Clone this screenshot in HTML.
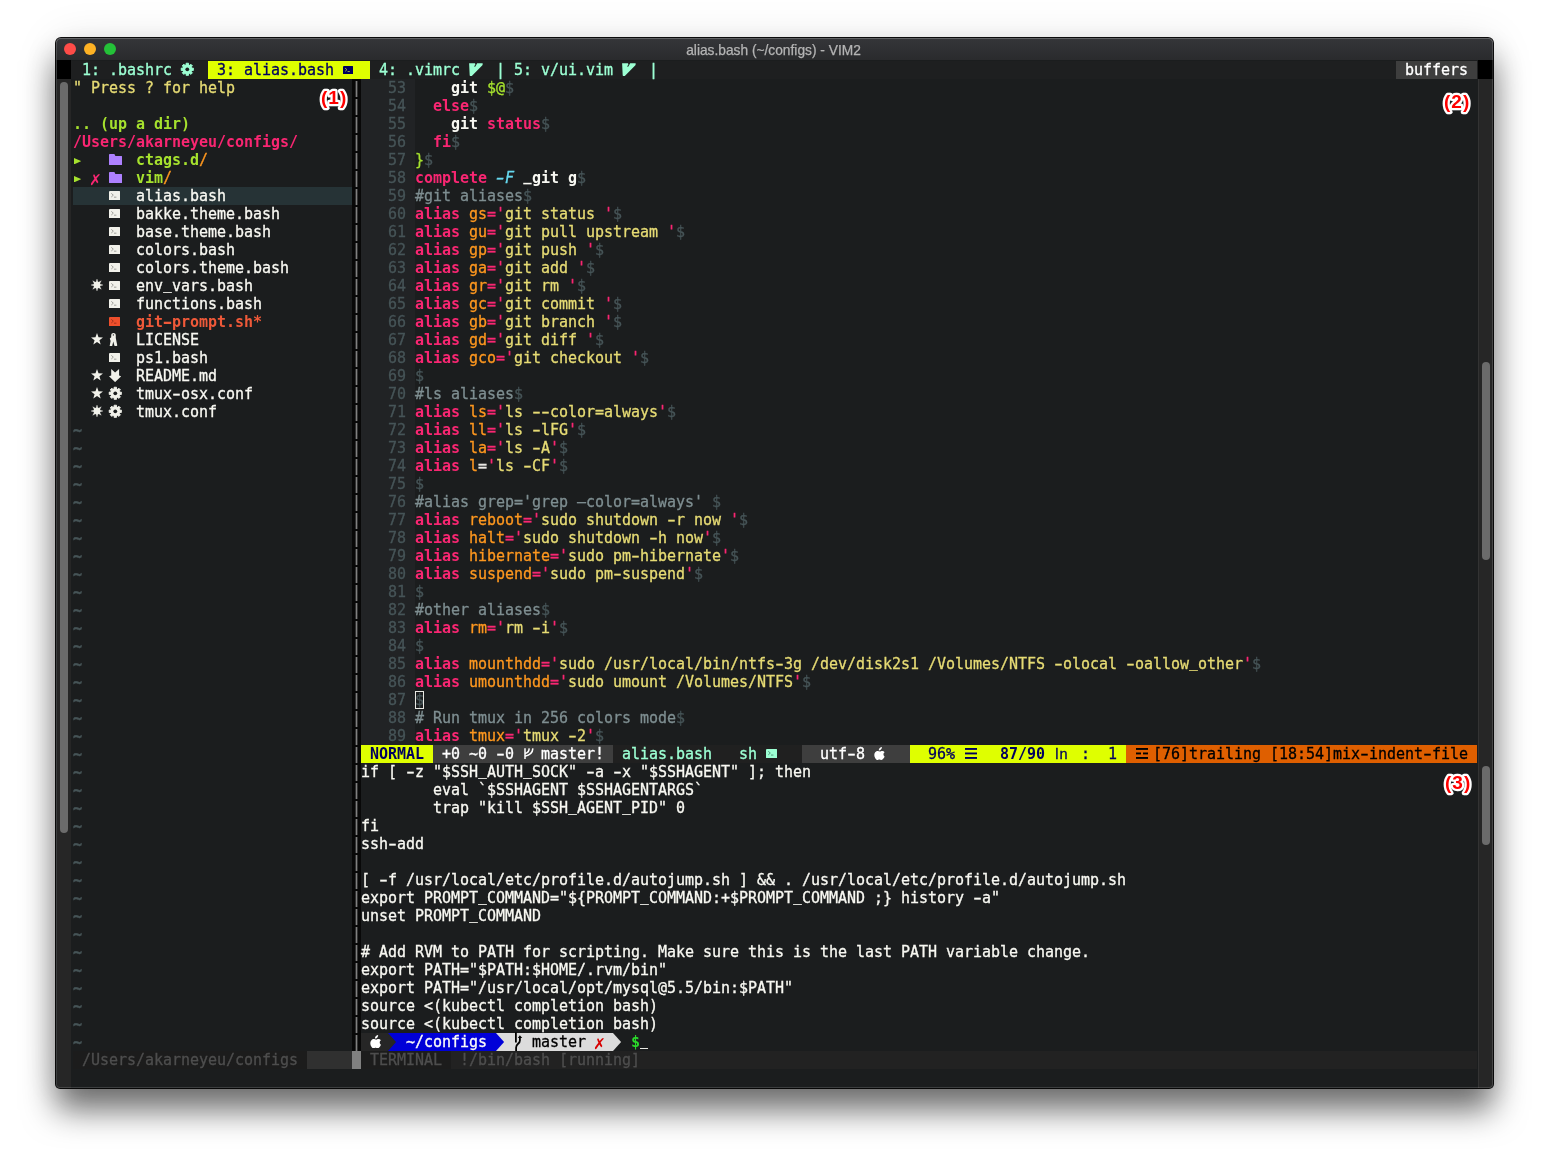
<!DOCTYPE html>
<html lang="en"><head><meta charset="utf-8"><title>alias.bash (~/configs) - VIM2</title>
<style>
html,body{margin:0;padding:0;background:#fff}
body{width:1549px;height:1162px;position:relative;overflow:hidden}
#root{position:absolute;left:0;top:0;width:1549px;height:1162px;will-change:transform}
.b{position:absolute;display:block}
.t{position:absolute;height:18px;line-height:18px;font-family:"DejaVu Sans Mono","Liberation Mono",monospace;font-size:15px;letter-spacing:-0.03125px;white-space:pre}
.t{-webkit-text-stroke:0.3px currentColor}
.B{font-weight:bold;-webkit-text-stroke:0} .I{font-style:italic}
.t i{font-style:inherit;display:inline-block}
.h{transform:scaleX(1.6)}
.u{position:relative;top:-2px;transform:scaleX(0.93)}
.flag{font-size:15px}
.ln{-webkit-text-stroke:0.3px currentColor;position:absolute;height:18px;line-height:18px;font-family:"Liberation Sans","DejaVu Sans",sans-serif;font-size:14.5px;letter-spacing:1px}
#win{position:absolute;left:56px;top:38px;width:1437px;height:1050px;background:#1b1d1e;border-radius:5px 5px 4px 4px;box-shadow:0 0 0 1px rgba(0,0,0,.95),0 22px 33px rgba(0,0,0,.56),0 2px 44px rgba(0,0,0,.10)}
#titlebar{position:absolute;left:56px;top:38px;width:1437px;height:22px;border-radius:5px 5px 0 0;background:linear-gradient(#353639,#2a2b2d);box-shadow:inset 0 1px 0 #58595b}
#rim{position:absolute;left:56px;top:38px;width:1437px;height:1050px;box-sizing:border-box;border:1px solid rgba(255,255,255,.15);border-top-color:rgba(255,255,255,.06);border-radius:5px 5px 4px 4px;pointer-events:none}
.dot{position:absolute;top:5px;width:12px;height:12px;border-radius:50%}
#title{position:absolute;left:-2px;right:0;top:1.5px;-webkit-text-stroke:0.25px #b4b4b4;height:22px;line-height:22px;text-align:center;font-family:"Liberation Sans","DejaVu Sans",sans-serif;font-size:13.75px;color:#b4b4b4}
.lab{position:absolute;font-family:"Liberation Sans","DejaVu Sans",sans-serif;font-weight:bold;font-size:19px;line-height:22px;color:#f00;-webkit-text-stroke:4.4px #fff;paint-order:stroke fill}
</style></head>
<body>
<div id="root">
<div id="win"></div>
<div id="titlebar"><span class="dot" style="left:8px;background:#fe4c48"></span><span class="dot" style="left:28px;background:#feb224"></span><span class="dot" style="left:48px;background:#24c138"></span><span id="title">alias.bash (~/configs) - VIM2</span></div>
<div class="b" style="left:57px;top:61px;width:1436px;height:18px;background:#1e1f20;"></div>
<div class="b" style="left:57px;top:79px;width:14px;height:1009px;background:#262626;border-bottom-left-radius:4px"></div>
<div class="b" style="left:1478px;top:79px;width:15px;height:1009px;background:#262626;border-left:1px solid #333;box-sizing:border-box;border-bottom-right-radius:4px"></div>
<div class="b" style="left:57px;top:60px;width:14px;height:19px;background:#000;"></div>
<div class="b" style="left:1478px;top:60px;width:15px;height:19px;background:#000;"></div>
<div class="b" style="left:60px;top:82px;width:8px;height:751px;background:#6b6b6b;border-radius:4px"></div>
<div class="b" style="left:1482px;top:362px;width:8px;height:198px;background:#6b6b6b;border-radius:4px"></div>
<div class="b" style="left:1482px;top:766px;width:8px;height:79px;background:#6b6b6b;border-radius:4px"></div>
<span class="t" style="left:82px;top:61px;color:#9cffd3;">1: .bashrc</span>
<svg class="b" style="left:180.1px;top:62.2px;" width="14.6" height="14.6" viewBox="-7.3 -7.3 14.6 14.6"><path d="M-1.13 -4.26 L-1.23 -6.08 L1.23 -6.08 L1.13 -4.26 L2.21 -3.82 L3.43 -5.17 L5.17 -3.43 L3.82 -2.21 L4.26 -1.13 L6.08 -1.23 L6.08 1.23 L4.26 1.13 L3.82 2.21 L5.17 3.43 L3.43 5.17 L2.21 3.82 L1.13 4.26 L1.23 6.08 L-1.23 6.08 L-1.13 4.26 L-2.21 3.82 L-3.43 5.17 L-5.17 3.43 L-3.82 2.21 L-4.26 1.13 L-6.08 1.23 L-6.08 -1.23 L-4.26 -1.13 L-3.82 -2.21 L-5.17 -3.43 L-3.43 -5.17 L-2.21 -3.82Z" fill="#9cffd3" stroke="#9cffd3" stroke-width="0.9" stroke-linejoin="round"/><circle r="4.76" fill="#9cffd3"/><circle r="1.89" fill="#1e1f20"/></svg>
<div class="b" style="left:208px;top:61px;width:162px;height:18px;background:#dfff00;"></div>
<span class="t" style="left:217px;top:61px;color:#00005f;">3: alias.bash</span>
<svg class="b" style="left:343px;top:65.5px;" width="10.4" height="8.6" viewBox="0 0 10.4 8.6"><rect x="0" y="0" width="10.4" height="8.6" rx="1" fill="#00005f"/><path d="M2.12 2.13 L3.96 3.70 L2.12 5.36" fill="none" stroke="#b9d34d" stroke-width="0.8"/><path d="M4.60 5.55 H6.81" stroke="#b9d34d" stroke-width="0.8"/></svg>
<span class="t" style="left:379px;top:61px;color:#9cffd3;">4: .vimrc</span>
<svg class="b" style="left:468.6px;top:62.8px;" width="14" height="13.6" viewBox="0 0 14 13.6"><path d="M0.1 0.2 H6 L6.4 1.6 L5.2 3.3 L6 4 L8.2 0.2 H13.6 Q13.9 1.2 13.4 2.2 L2.6 13.2 Q1.4 13.6 0.7 12.4 Z" fill="#9cffd3"/></svg>
<span class="t" style="left:496px;top:61px;color:#9cffd3;">|</span>
<span class="t" style="left:514px;top:61px;color:#9cffd3;">5: v/ui.vim</span>
<svg class="b" style="left:621.6px;top:62.8px;" width="14" height="13.6" viewBox="0 0 14 13.6"><path d="M0.1 0.2 H6 L6.4 1.6 L5.2 3.3 L6 4 L8.2 0.2 H13.6 Q13.9 1.2 13.4 2.2 L2.6 13.2 Q1.4 13.6 0.7 12.4 Z" fill="#9cffd3"/></svg>
<span class="t" style="left:649px;top:61px;color:#9cffd3;">|</span>
<div class="b" style="left:1396px;top:61px;width:81px;height:18px;background:#3e3e3e;"></div>
<span class="t" style="left:1405px;top:61px;color:#ffffff;">buffers</span>
<span class="t" style="left:73px;top:79px;color:#e6db74;">" Press ? for help</span>
<span class="t B" style="left:73px;top:115px;color:#a6e22e;">.. (up a dir)</span>
<span class="t B" style="left:73px;top:133px;color:#f92672;">/Users/akarneyeu/configs/</span>
<svg class="b" style="left:73.6px;top:157.6px;" width="7.4" height="6.4" viewBox="0 0 7.4 6.4"><path d="M0 0 L7.4 3.2 L0 6.4 Z" fill="#a6e22e"/></svg>
<svg class="b" style="left:108.7px;top:153.9px;" width="13.1" height="11.2" viewBox="0 0 13.1 11.2"><path d="M0 0.8 Q0 0 0.8 0 H5.4 L6.4 2 H12.4 Q13.1 2 13.1 2.8 V10.4 Q13.1 11.2 12.3 11.2 H0.8 Q0 11.2 0 10.4 Z" fill="#ae81ff"/></svg>
<span class="t B" style="left:136px;top:151px;color:#a6e22e;">ctags.d</span>
<span class="t" style="left:199px;top:151px;color:#fd971f;">/</span>
<svg class="b" style="left:73.6px;top:175.6px;" width="7.4" height="6.4" viewBox="0 0 7.4 6.4"><path d="M0 0 L7.4 3.2 L0 6.4 Z" fill="#a6e22e"/></svg>
<span class="t B" style="left:91px;top:169px;color:#f92672;font-size:18.5px;margin-left:-1.2px;margin-top:0.5px">✗</span>
<svg class="b" style="left:108.7px;top:171.9px;" width="13.1" height="11.2" viewBox="0 0 13.1 11.2"><path d="M0 0.8 Q0 0 0.8 0 H5.4 L6.4 2 H12.4 Q13.1 2 13.1 2.8 V10.4 Q13.1 11.2 12.3 11.2 H0.8 Q0 11.2 0 10.4 Z" fill="#ae81ff"/></svg>
<span class="t B" style="left:136px;top:169px;color:#a6e22e;">vim</span>
<span class="t" style="left:163px;top:169px;color:#fd971f;">/</span>
<div class="b" style="left:73px;top:187px;width:279px;height:18px;background:#263336;"></div>
<svg class="b" style="left:108.8px;top:190.6px;" width="11.3" height="9.6" viewBox="0 0 11.3 9.6"><rect x="0" y="0" width="11.3" height="9.6" rx="1" fill="#f1f1ea"/><path d="M2.30 2.37 L4.30 4.13 L2.30 5.99" fill="none" stroke="#8a8a86" stroke-width="0.8"/><path d="M5.00 6.19 H7.40" stroke="#8a8a86" stroke-width="0.8"/></svg>
<span class="t" style="left:136px;top:187px;color:#f8f8f2;">alias.bash</span>
<svg class="b" style="left:108.8px;top:208.6px;" width="11.3" height="9.6" viewBox="0 0 11.3 9.6"><rect x="0" y="0" width="11.3" height="9.6" rx="1" fill="#f1f1ea"/><path d="M2.30 2.37 L4.30 4.13 L2.30 5.99" fill="none" stroke="#8a8a86" stroke-width="0.8"/><path d="M5.00 6.19 H7.40" stroke="#8a8a86" stroke-width="0.8"/></svg>
<span class="t" style="left:136px;top:205px;color:#f8f8f2;">bakke.theme.bash</span>
<svg class="b" style="left:108.8px;top:226.6px;" width="11.3" height="9.6" viewBox="0 0 11.3 9.6"><rect x="0" y="0" width="11.3" height="9.6" rx="1" fill="#f1f1ea"/><path d="M2.30 2.37 L4.30 4.13 L2.30 5.99" fill="none" stroke="#8a8a86" stroke-width="0.8"/><path d="M5.00 6.19 H7.40" stroke="#8a8a86" stroke-width="0.8"/></svg>
<span class="t" style="left:136px;top:223px;color:#f8f8f2;">base.theme.bash</span>
<svg class="b" style="left:108.8px;top:244.6px;" width="11.3" height="9.6" viewBox="0 0 11.3 9.6"><rect x="0" y="0" width="11.3" height="9.6" rx="1" fill="#f1f1ea"/><path d="M2.30 2.37 L4.30 4.13 L2.30 5.99" fill="none" stroke="#8a8a86" stroke-width="0.8"/><path d="M5.00 6.19 H7.40" stroke="#8a8a86" stroke-width="0.8"/></svg>
<span class="t" style="left:136px;top:241px;color:#f8f8f2;">colors.bash</span>
<svg class="b" style="left:108.8px;top:262.6px;" width="11.3" height="9.6" viewBox="0 0 11.3 9.6"><rect x="0" y="0" width="11.3" height="9.6" rx="1" fill="#f1f1ea"/><path d="M2.30 2.37 L4.30 4.13 L2.30 5.99" fill="none" stroke="#8a8a86" stroke-width="0.8"/><path d="M5.00 6.19 H7.40" stroke="#8a8a86" stroke-width="0.8"/></svg>
<span class="t" style="left:136px;top:259px;color:#f8f8f2;">colors.theme.bash</span>
<svg class="b" style="left:90px;top:278.3px;" width="14" height="14" viewBox="-7 -7 14 14"><path d="M0.00 -6.00 L1.07 -2.59 L4.24 -4.24 L2.59 -1.07 L6.00 0.00 L2.59 1.07 L4.24 4.24 L1.07 2.59 L0.00 6.00 L-1.07 2.59 L-4.24 4.24 L-2.59 1.07 L-6.00 0.00 L-2.59 -1.07 L-4.24 -4.24 L-1.07 -2.59Z" fill="#f1f1ea" stroke="#f1f1ea" stroke-width="0.3" stroke-linejoin="round"/><circle r="3.2" fill="#f1f1ea"/></svg>
<svg class="b" style="left:108.8px;top:280.6px;" width="11.3" height="9.6" viewBox="0 0 11.3 9.6"><rect x="0" y="0" width="11.3" height="9.6" rx="1" fill="#f1f1ea"/><path d="M2.30 2.37 L4.30 4.13 L2.30 5.99" fill="none" stroke="#8a8a86" stroke-width="0.8"/><path d="M5.00 6.19 H7.40" stroke="#8a8a86" stroke-width="0.8"/></svg>
<span class="t" style="left:136px;top:277px;color:#f8f8f2;">env<i class="u">_</i>vars.bash</span>
<svg class="b" style="left:108.8px;top:298.6px;" width="11.3" height="9.6" viewBox="0 0 11.3 9.6"><rect x="0" y="0" width="11.3" height="9.6" rx="1" fill="#f1f1ea"/><path d="M2.30 2.37 L4.30 4.13 L2.30 5.99" fill="none" stroke="#8a8a86" stroke-width="0.8"/><path d="M5.00 6.19 H7.40" stroke="#8a8a86" stroke-width="0.8"/></svg>
<span class="t" style="left:136px;top:295px;color:#f8f8f2;">functions.bash</span>
<svg class="b" style="left:108.8px;top:316.6px;" width="11.3" height="9.6" viewBox="0 0 11.3 9.6"><rect x="0" y="0" width="11.3" height="9.6" rx="1" fill="#ee4f2c"/><path d="M2.30 2.37 L4.30 4.13 L2.30 5.99" fill="none" stroke="#8a2a18" stroke-width="0.8"/><path d="M5.00 6.19 H7.40" stroke="#8a2a18" stroke-width="0.8"/></svg>
<span class="t B" style="left:136px;top:313px;color:#ef5939;">git<i class="h">-</i>prompt.sh*</span>
<svg class="b" style="left:90.1px;top:332.3px;" width="14" height="14" viewBox="-7 -7 14 14"><path d="M0.00 -5.90 L1.50 -1.66 L5.99 -1.55 L2.43 1.19 L3.70 5.50 L0.00 2.95 L-3.70 5.50 L-2.43 1.19 L-5.99 -1.55 L-1.50 -1.66Z" fill="#f1f1ea"/></svg>
<svg class="b" style="left:109.2px;top:332.9px;" width="8.4" height="13.4" viewBox="0 0 8.4 13.4"><path d="M2.2 2.4 C2.2 0.8 3.2 0 4.5 0 C5.8 0 6.8 0.8 6.8 2.4 L6.8 5 L8.3 12.6 L7 13.4 L5.4 12.8 L4.3 8.6 L3.2 13 L0.6 13.2 L1.6 8 L0.8 5.6 L2.2 4.2 Z" fill="#f1f1ea"/><circle cx="4.4" cy="1.9" r="0.65" fill="#1b1d1e"/></svg>
<span class="t" style="left:136px;top:331px;color:#f8f8f2;">LICENSE</span>
<svg class="b" style="left:108.8px;top:352.6px;" width="11.3" height="9.6" viewBox="0 0 11.3 9.6"><rect x="0" y="0" width="11.3" height="9.6" rx="1" fill="#f1f1ea"/><path d="M2.30 2.37 L4.30 4.13 L2.30 5.99" fill="none" stroke="#8a8a86" stroke-width="0.8"/><path d="M5.00 6.19 H7.40" stroke="#8a8a86" stroke-width="0.8"/></svg>
<span class="t" style="left:136px;top:349px;color:#f8f8f2;">ps1.bash</span>
<svg class="b" style="left:90.1px;top:368.3px;" width="14" height="14" viewBox="-7 -7 14 14"><path d="M0.00 -5.90 L1.50 -1.66 L5.99 -1.55 L2.43 1.19 L3.70 5.50 L0.00 2.95 L-3.70 5.50 L-2.43 1.19 L-5.99 -1.55 L-1.50 -1.66Z" fill="#f1f1ea"/></svg>
<svg class="b" style="left:108.8px;top:369px;" width="12.2" height="13.1" viewBox="0 0 12.2 13.1"><path d="M2.2 0 L6.1 3.4 L10.1 0 V6.4 L12.2 7.3 L6.1 13.1 L0 7.3 L2.2 6.4 Z" fill="#f1f1ea"/></svg>
<span class="t" style="left:136px;top:367px;color:#f8f8f2;">README.md</span>
<svg class="b" style="left:90.1px;top:386.3px;" width="14" height="14" viewBox="-7 -7 14 14"><path d="M0.00 -5.90 L1.50 -1.66 L5.99 -1.55 L2.43 1.19 L3.70 5.50 L0.00 2.95 L-3.70 5.50 L-2.43 1.19 L-5.99 -1.55 L-1.50 -1.66Z" fill="#f1f1ea"/></svg>
<svg class="b" style="left:108.0px;top:386.2px;" width="14.6" height="14.6" viewBox="-7.3 -7.3 14.6 14.6"><path d="M-1.13 -4.26 L-1.23 -6.08 L1.23 -6.08 L1.13 -4.26 L2.21 -3.82 L3.43 -5.17 L5.17 -3.43 L3.82 -2.21 L4.26 -1.13 L6.08 -1.23 L6.08 1.23 L4.26 1.13 L3.82 2.21 L5.17 3.43 L3.43 5.17 L2.21 3.82 L1.13 4.26 L1.23 6.08 L-1.23 6.08 L-1.13 4.26 L-2.21 3.82 L-3.43 5.17 L-5.17 3.43 L-3.82 2.21 L-4.26 1.13 L-6.08 1.23 L-6.08 -1.23 L-4.26 -1.13 L-3.82 -2.21 L-5.17 -3.43 L-3.43 -5.17 L-2.21 -3.82Z" fill="#f1f1ea" stroke="#f1f1ea" stroke-width="0.9" stroke-linejoin="round"/><circle r="4.76" fill="#f1f1ea"/><circle r="1.89" fill="#1b1d1e"/></svg>
<span class="t" style="left:136px;top:385px;color:#f8f8f2;">tmux<i class="h">-</i>osx.conf</span>
<svg class="b" style="left:90px;top:404.3px;" width="14" height="14" viewBox="-7 -7 14 14"><path d="M0.00 -6.00 L1.07 -2.59 L4.24 -4.24 L2.59 -1.07 L6.00 0.00 L2.59 1.07 L4.24 4.24 L1.07 2.59 L0.00 6.00 L-1.07 2.59 L-4.24 4.24 L-2.59 1.07 L-6.00 0.00 L-2.59 -1.07 L-4.24 -4.24 L-1.07 -2.59Z" fill="#f1f1ea" stroke="#f1f1ea" stroke-width="0.3" stroke-linejoin="round"/><circle r="3.2" fill="#f1f1ea"/></svg>
<svg class="b" style="left:108.0px;top:404.2px;" width="14.6" height="14.6" viewBox="-7.3 -7.3 14.6 14.6"><path d="M-1.13 -4.26 L-1.23 -6.08 L1.23 -6.08 L1.13 -4.26 L2.21 -3.82 L3.43 -5.17 L5.17 -3.43 L3.82 -2.21 L4.26 -1.13 L6.08 -1.23 L6.08 1.23 L4.26 1.13 L3.82 2.21 L5.17 3.43 L3.43 5.17 L2.21 3.82 L1.13 4.26 L1.23 6.08 L-1.23 6.08 L-1.13 4.26 L-2.21 3.82 L-3.43 5.17 L-5.17 3.43 L-3.82 2.21 L-4.26 1.13 L-6.08 1.23 L-6.08 -1.23 L-4.26 -1.13 L-3.82 -2.21 L-5.17 -3.43 L-3.43 -5.17 L-2.21 -3.82Z" fill="#f1f1ea" stroke="#f1f1ea" stroke-width="0.9" stroke-linejoin="round"/><circle r="4.76" fill="#f1f1ea"/><circle r="1.89" fill="#1b1d1e"/></svg>
<span class="t" style="left:136px;top:403px;color:#f8f8f2;">tmux.conf</span>
<span class="t B" style="left:73px;top:421px;color:#465457;margin-top:1px;-webkit-text-stroke:0.45px #465457">~</span>
<span class="t B" style="left:73px;top:439px;color:#465457;margin-top:1px;-webkit-text-stroke:0.45px #465457">~</span>
<span class="t B" style="left:73px;top:457px;color:#465457;margin-top:1px;-webkit-text-stroke:0.45px #465457">~</span>
<span class="t B" style="left:73px;top:475px;color:#465457;margin-top:1px;-webkit-text-stroke:0.45px #465457">~</span>
<span class="t B" style="left:73px;top:493px;color:#465457;margin-top:1px;-webkit-text-stroke:0.45px #465457">~</span>
<span class="t B" style="left:73px;top:511px;color:#465457;margin-top:1px;-webkit-text-stroke:0.45px #465457">~</span>
<span class="t B" style="left:73px;top:529px;color:#465457;margin-top:1px;-webkit-text-stroke:0.45px #465457">~</span>
<span class="t B" style="left:73px;top:547px;color:#465457;margin-top:1px;-webkit-text-stroke:0.45px #465457">~</span>
<span class="t B" style="left:73px;top:565px;color:#465457;margin-top:1px;-webkit-text-stroke:0.45px #465457">~</span>
<span class="t B" style="left:73px;top:583px;color:#465457;margin-top:1px;-webkit-text-stroke:0.45px #465457">~</span>
<span class="t B" style="left:73px;top:601px;color:#465457;margin-top:1px;-webkit-text-stroke:0.45px #465457">~</span>
<span class="t B" style="left:73px;top:619px;color:#465457;margin-top:1px;-webkit-text-stroke:0.45px #465457">~</span>
<span class="t B" style="left:73px;top:637px;color:#465457;margin-top:1px;-webkit-text-stroke:0.45px #465457">~</span>
<span class="t B" style="left:73px;top:655px;color:#465457;margin-top:1px;-webkit-text-stroke:0.45px #465457">~</span>
<span class="t B" style="left:73px;top:673px;color:#465457;margin-top:1px;-webkit-text-stroke:0.45px #465457">~</span>
<span class="t B" style="left:73px;top:691px;color:#465457;margin-top:1px;-webkit-text-stroke:0.45px #465457">~</span>
<span class="t B" style="left:73px;top:709px;color:#465457;margin-top:1px;-webkit-text-stroke:0.45px #465457">~</span>
<span class="t B" style="left:73px;top:727px;color:#465457;margin-top:1px;-webkit-text-stroke:0.45px #465457">~</span>
<span class="t B" style="left:73px;top:745px;color:#465457;margin-top:1px;-webkit-text-stroke:0.45px #465457">~</span>
<span class="t B" style="left:73px;top:763px;color:#465457;margin-top:1px;-webkit-text-stroke:0.45px #465457">~</span>
<span class="t B" style="left:73px;top:781px;color:#465457;margin-top:1px;-webkit-text-stroke:0.45px #465457">~</span>
<span class="t B" style="left:73px;top:799px;color:#465457;margin-top:1px;-webkit-text-stroke:0.45px #465457">~</span>
<span class="t B" style="left:73px;top:817px;color:#465457;margin-top:1px;-webkit-text-stroke:0.45px #465457">~</span>
<span class="t B" style="left:73px;top:835px;color:#465457;margin-top:1px;-webkit-text-stroke:0.45px #465457">~</span>
<span class="t B" style="left:73px;top:853px;color:#465457;margin-top:1px;-webkit-text-stroke:0.45px #465457">~</span>
<span class="t B" style="left:73px;top:871px;color:#465457;margin-top:1px;-webkit-text-stroke:0.45px #465457">~</span>
<span class="t B" style="left:73px;top:889px;color:#465457;margin-top:1px;-webkit-text-stroke:0.45px #465457">~</span>
<span class="t B" style="left:73px;top:907px;color:#465457;margin-top:1px;-webkit-text-stroke:0.45px #465457">~</span>
<span class="t B" style="left:73px;top:925px;color:#465457;margin-top:1px;-webkit-text-stroke:0.45px #465457">~</span>
<span class="t B" style="left:73px;top:943px;color:#465457;margin-top:1px;-webkit-text-stroke:0.45px #465457">~</span>
<span class="t B" style="left:73px;top:961px;color:#465457;margin-top:1px;-webkit-text-stroke:0.45px #465457">~</span>
<span class="t B" style="left:73px;top:979px;color:#465457;margin-top:1px;-webkit-text-stroke:0.45px #465457">~</span>
<span class="t B" style="left:73px;top:997px;color:#465457;margin-top:1px;-webkit-text-stroke:0.45px #465457">~</span>
<span class="t B" style="left:73px;top:1015px;color:#465457;margin-top:1px;-webkit-text-stroke:0.45px #465457">~</span>
<span class="t B" style="left:73px;top:1033px;color:#465457;margin-top:1px;-webkit-text-stroke:0.45px #465457">~</span>
<div class="b" style="left:352px;top:79px;width:9px;height:972px;background:#080808;"></div>
<span class="t B" style="left:352px;top:79px;color:#808080;">|</span>
<span class="t B" style="left:352px;top:97px;color:#808080;">|</span>
<span class="t B" style="left:352px;top:115px;color:#808080;">|</span>
<span class="t B" style="left:352px;top:133px;color:#808080;">|</span>
<span class="t B" style="left:352px;top:151px;color:#808080;">|</span>
<span class="t B" style="left:352px;top:169px;color:#808080;">|</span>
<span class="t B" style="left:352px;top:187px;color:#808080;">|</span>
<span class="t B" style="left:352px;top:205px;color:#808080;">|</span>
<span class="t B" style="left:352px;top:223px;color:#808080;">|</span>
<span class="t B" style="left:352px;top:241px;color:#808080;">|</span>
<span class="t B" style="left:352px;top:259px;color:#808080;">|</span>
<span class="t B" style="left:352px;top:277px;color:#808080;">|</span>
<span class="t B" style="left:352px;top:295px;color:#808080;">|</span>
<span class="t B" style="left:352px;top:313px;color:#808080;">|</span>
<span class="t B" style="left:352px;top:331px;color:#808080;">|</span>
<span class="t B" style="left:352px;top:349px;color:#808080;">|</span>
<span class="t B" style="left:352px;top:367px;color:#808080;">|</span>
<span class="t B" style="left:352px;top:385px;color:#808080;">|</span>
<span class="t B" style="left:352px;top:403px;color:#808080;">|</span>
<span class="t B" style="left:352px;top:421px;color:#808080;">|</span>
<span class="t B" style="left:352px;top:439px;color:#808080;">|</span>
<span class="t B" style="left:352px;top:457px;color:#808080;">|</span>
<span class="t B" style="left:352px;top:475px;color:#808080;">|</span>
<span class="t B" style="left:352px;top:493px;color:#808080;">|</span>
<span class="t B" style="left:352px;top:511px;color:#808080;">|</span>
<span class="t B" style="left:352px;top:529px;color:#808080;">|</span>
<span class="t B" style="left:352px;top:547px;color:#808080;">|</span>
<span class="t B" style="left:352px;top:565px;color:#808080;">|</span>
<span class="t B" style="left:352px;top:583px;color:#808080;">|</span>
<span class="t B" style="left:352px;top:601px;color:#808080;">|</span>
<span class="t B" style="left:352px;top:619px;color:#808080;">|</span>
<span class="t B" style="left:352px;top:637px;color:#808080;">|</span>
<span class="t B" style="left:352px;top:655px;color:#808080;">|</span>
<span class="t B" style="left:352px;top:673px;color:#808080;">|</span>
<span class="t B" style="left:352px;top:691px;color:#808080;">|</span>
<span class="t B" style="left:352px;top:709px;color:#808080;">|</span>
<span class="t B" style="left:352px;top:727px;color:#808080;">|</span>
<span class="t B" style="left:352px;top:745px;color:#808080;">|</span>
<span class="t B" style="left:352px;top:763px;color:#808080;">|</span>
<span class="t B" style="left:352px;top:781px;color:#808080;">|</span>
<span class="t B" style="left:352px;top:799px;color:#808080;">|</span>
<span class="t B" style="left:352px;top:817px;color:#808080;">|</span>
<span class="t B" style="left:352px;top:835px;color:#808080;">|</span>
<span class="t B" style="left:352px;top:853px;color:#808080;">|</span>
<span class="t B" style="left:352px;top:871px;color:#808080;">|</span>
<span class="t B" style="left:352px;top:889px;color:#808080;">|</span>
<span class="t B" style="left:352px;top:907px;color:#808080;">|</span>
<span class="t B" style="left:352px;top:925px;color:#808080;">|</span>
<span class="t B" style="left:352px;top:943px;color:#808080;">|</span>
<span class="t B" style="left:352px;top:961px;color:#808080;">|</span>
<span class="t B" style="left:352px;top:979px;color:#808080;">|</span>
<span class="t B" style="left:352px;top:997px;color:#808080;">|</span>
<span class="t B" style="left:352px;top:1015px;color:#808080;">|</span>
<span class="t B" style="left:352px;top:1033px;color:#808080;">|</span>
<div class="b" style="left:361px;top:79px;width:54px;height:666px;background:#212325;"></div>
<span class="t" style="left:388px;top:79px;color:#465457;">53</span>
<span class="t B" style="left:451px;top:79px;color:#f8f8f2;">git</span>
<span class="t" style="left:487px;top:79px;color:#a6e22e;">$@</span>
<span class="t" style="left:505px;top:79px;color:#465457;">$</span>
<span class="t" style="left:388px;top:97px;color:#465457;">54</span>
<span class="t B" style="left:433px;top:97px;color:#f92672;">else</span>
<span class="t" style="left:469px;top:97px;color:#465457;">$</span>
<span class="t" style="left:388px;top:115px;color:#465457;">55</span>
<span class="t B" style="left:451px;top:115px;color:#f8f8f2;">git</span>
<span class="t B" style="left:487px;top:115px;color:#f92672;">status</span>
<span class="t" style="left:541px;top:115px;color:#465457;">$</span>
<span class="t" style="left:388px;top:133px;color:#465457;">56</span>
<span class="t B" style="left:433px;top:133px;color:#f92672;">fi</span>
<span class="t" style="left:451px;top:133px;color:#465457;">$</span>
<span class="t" style="left:388px;top:151px;color:#465457;">57</span>
<span class="t" style="left:415px;top:151px;color:#a6e22e;">}</span>
<span class="t" style="left:424px;top:151px;color:#465457;">$</span>
<span class="t" style="left:388px;top:169px;color:#465457;">58</span>
<span class="t B" style="left:415px;top:169px;color:#f92672;">complete</span>
<span class="t I" style="left:496px;top:169px;color:#66d9ef;"><i class="h">-</i>F</span>
<span class="t B" style="left:523px;top:169px;color:#f8f8f2;"><i class="u">_</i>git g</span>
<span class="t" style="left:577px;top:169px;color:#465457;">$</span>
<span class="t" style="left:388px;top:187px;color:#465457;">59</span>
<span class="t" style="left:415px;top:187px;color:#7e8e91;">#git aliases</span>
<span class="t" style="left:523px;top:187px;color:#465457;">$</span>
<span class="t" style="left:388px;top:205px;color:#465457;">60</span>
<span class="t B" style="left:415px;top:205px;color:#f92672;">alias</span>
<span class="t" style="left:469px;top:205px;color:#fd971f;">gs</span>
<span class="t" style="left:487px;top:205px;color:#f92672;">=</span>
<span class="t" style="left:496px;top:205px;color:#f92672;">'</span>
<span class="t" style="left:505px;top:205px;color:#e6db74;">git status</span>
<span class="t" style="left:604px;top:205px;color:#f92672;">'</span>
<span class="t" style="left:613px;top:205px;color:#465457;">$</span>
<span class="t" style="left:388px;top:223px;color:#465457;">61</span>
<span class="t B" style="left:415px;top:223px;color:#f92672;">alias</span>
<span class="t" style="left:469px;top:223px;color:#fd971f;">gu</span>
<span class="t" style="left:487px;top:223px;color:#f92672;">=</span>
<span class="t" style="left:496px;top:223px;color:#f92672;">'</span>
<span class="t" style="left:505px;top:223px;color:#e6db74;">git pull upstream</span>
<span class="t" style="left:667px;top:223px;color:#f92672;">'</span>
<span class="t" style="left:676px;top:223px;color:#465457;">$</span>
<span class="t" style="left:388px;top:241px;color:#465457;">62</span>
<span class="t B" style="left:415px;top:241px;color:#f92672;">alias</span>
<span class="t" style="left:469px;top:241px;color:#fd971f;">gp</span>
<span class="t" style="left:487px;top:241px;color:#f92672;">=</span>
<span class="t" style="left:496px;top:241px;color:#f92672;">'</span>
<span class="t" style="left:505px;top:241px;color:#e6db74;">git push</span>
<span class="t" style="left:586px;top:241px;color:#f92672;">'</span>
<span class="t" style="left:595px;top:241px;color:#465457;">$</span>
<span class="t" style="left:388px;top:259px;color:#465457;">63</span>
<span class="t B" style="left:415px;top:259px;color:#f92672;">alias</span>
<span class="t" style="left:469px;top:259px;color:#fd971f;">ga</span>
<span class="t" style="left:487px;top:259px;color:#f92672;">=</span>
<span class="t" style="left:496px;top:259px;color:#f92672;">'</span>
<span class="t" style="left:505px;top:259px;color:#e6db74;">git add</span>
<span class="t" style="left:577px;top:259px;color:#f92672;">'</span>
<span class="t" style="left:586px;top:259px;color:#465457;">$</span>
<span class="t" style="left:388px;top:277px;color:#465457;">64</span>
<span class="t B" style="left:415px;top:277px;color:#f92672;">alias</span>
<span class="t" style="left:469px;top:277px;color:#fd971f;">gr</span>
<span class="t" style="left:487px;top:277px;color:#f92672;">=</span>
<span class="t" style="left:496px;top:277px;color:#f92672;">'</span>
<span class="t" style="left:505px;top:277px;color:#e6db74;">git rm</span>
<span class="t" style="left:568px;top:277px;color:#f92672;">'</span>
<span class="t" style="left:577px;top:277px;color:#465457;">$</span>
<span class="t" style="left:388px;top:295px;color:#465457;">65</span>
<span class="t B" style="left:415px;top:295px;color:#f92672;">alias</span>
<span class="t" style="left:469px;top:295px;color:#fd971f;">gc</span>
<span class="t" style="left:487px;top:295px;color:#f92672;">=</span>
<span class="t" style="left:496px;top:295px;color:#f92672;">'</span>
<span class="t" style="left:505px;top:295px;color:#e6db74;">git commit</span>
<span class="t" style="left:604px;top:295px;color:#f92672;">'</span>
<span class="t" style="left:613px;top:295px;color:#465457;">$</span>
<span class="t" style="left:388px;top:313px;color:#465457;">66</span>
<span class="t B" style="left:415px;top:313px;color:#f92672;">alias</span>
<span class="t" style="left:469px;top:313px;color:#fd971f;">gb</span>
<span class="t" style="left:487px;top:313px;color:#f92672;">=</span>
<span class="t" style="left:496px;top:313px;color:#f92672;">'</span>
<span class="t" style="left:505px;top:313px;color:#e6db74;">git branch</span>
<span class="t" style="left:604px;top:313px;color:#f92672;">'</span>
<span class="t" style="left:613px;top:313px;color:#465457;">$</span>
<span class="t" style="left:388px;top:331px;color:#465457;">67</span>
<span class="t B" style="left:415px;top:331px;color:#f92672;">alias</span>
<span class="t" style="left:469px;top:331px;color:#fd971f;">gd</span>
<span class="t" style="left:487px;top:331px;color:#f92672;">=</span>
<span class="t" style="left:496px;top:331px;color:#f92672;">'</span>
<span class="t" style="left:505px;top:331px;color:#e6db74;">git diff</span>
<span class="t" style="left:586px;top:331px;color:#f92672;">'</span>
<span class="t" style="left:595px;top:331px;color:#465457;">$</span>
<span class="t" style="left:388px;top:349px;color:#465457;">68</span>
<span class="t B" style="left:415px;top:349px;color:#f92672;">alias</span>
<span class="t" style="left:469px;top:349px;color:#fd971f;">gco</span>
<span class="t" style="left:496px;top:349px;color:#f92672;">=</span>
<span class="t" style="left:505px;top:349px;color:#f92672;">'</span>
<span class="t" style="left:514px;top:349px;color:#e6db74;">git checkout</span>
<span class="t" style="left:631px;top:349px;color:#f92672;">'</span>
<span class="t" style="left:640px;top:349px;color:#465457;">$</span>
<span class="t" style="left:388px;top:367px;color:#465457;">69</span>
<span class="t" style="left:415px;top:367px;color:#465457;">$</span>
<span class="t" style="left:388px;top:385px;color:#465457;">70</span>
<span class="t" style="left:415px;top:385px;color:#7e8e91;">#ls aliases</span>
<span class="t" style="left:514px;top:385px;color:#465457;">$</span>
<span class="t" style="left:388px;top:403px;color:#465457;">71</span>
<span class="t B" style="left:415px;top:403px;color:#f92672;">alias</span>
<span class="t" style="left:469px;top:403px;color:#fd971f;">ls</span>
<span class="t" style="left:487px;top:403px;color:#f92672;">=</span>
<span class="t" style="left:496px;top:403px;color:#f92672;">'</span>
<span class="t" style="left:505px;top:403px;color:#e6db74;">ls <i class="h">-</i><i class="h">-</i>color=always</span>
<span class="t" style="left:658px;top:403px;color:#f92672;">'</span>
<span class="t" style="left:667px;top:403px;color:#465457;">$</span>
<span class="t" style="left:388px;top:421px;color:#465457;">72</span>
<span class="t B" style="left:415px;top:421px;color:#f92672;">alias</span>
<span class="t" style="left:469px;top:421px;color:#fd971f;">ll</span>
<span class="t" style="left:487px;top:421px;color:#f92672;">=</span>
<span class="t" style="left:496px;top:421px;color:#f92672;">'</span>
<span class="t" style="left:505px;top:421px;color:#e6db74;">ls <i class="h">-</i>lFG</span>
<span class="t" style="left:568px;top:421px;color:#f92672;">'</span>
<span class="t" style="left:577px;top:421px;color:#465457;">$</span>
<span class="t" style="left:388px;top:439px;color:#465457;">73</span>
<span class="t B" style="left:415px;top:439px;color:#f92672;">alias</span>
<span class="t" style="left:469px;top:439px;color:#fd971f;">la</span>
<span class="t" style="left:487px;top:439px;color:#f92672;">=</span>
<span class="t" style="left:496px;top:439px;color:#f92672;">'</span>
<span class="t" style="left:505px;top:439px;color:#e6db74;">ls <i class="h">-</i>A</span>
<span class="t" style="left:550px;top:439px;color:#f92672;">'</span>
<span class="t" style="left:559px;top:439px;color:#465457;">$</span>
<span class="t" style="left:388px;top:457px;color:#465457;">74</span>
<span class="t B" style="left:415px;top:457px;color:#f92672;">alias</span>
<span class="t" style="left:469px;top:457px;color:#fd971f;">l</span>
<span class="t" style="left:478px;top:457px;color:#e8e8e3;">=</span>
<span class="t" style="left:487px;top:457px;color:#f92672;">'</span>
<span class="t" style="left:496px;top:457px;color:#e6db74;">ls <i class="h">-</i>CF</span>
<span class="t" style="left:550px;top:457px;color:#f92672;">'</span>
<span class="t" style="left:559px;top:457px;color:#465457;">$</span>
<span class="t" style="left:388px;top:475px;color:#465457;">75</span>
<span class="t" style="left:415px;top:475px;color:#465457;">$</span>
<span class="t" style="left:388px;top:493px;color:#465457;">76</span>
<span class="t" style="left:415px;top:493px;color:#7e8e91;">#alias grep='grep –color=always'</span>
<span class="t" style="left:712px;top:493px;color:#465457;">$</span>
<span class="t" style="left:388px;top:511px;color:#465457;">77</span>
<span class="t B" style="left:415px;top:511px;color:#f92672;">alias</span>
<span class="t" style="left:469px;top:511px;color:#fd971f;">reboot</span>
<span class="t" style="left:523px;top:511px;color:#f92672;">=</span>
<span class="t" style="left:532px;top:511px;color:#f92672;">'</span>
<span class="t" style="left:541px;top:511px;color:#e6db74;">sudo shutdown <i class="h">-</i>r now</span>
<span class="t" style="left:730px;top:511px;color:#f92672;">'</span>
<span class="t" style="left:739px;top:511px;color:#465457;">$</span>
<span class="t" style="left:388px;top:529px;color:#465457;">78</span>
<span class="t B" style="left:415px;top:529px;color:#f92672;">alias</span>
<span class="t" style="left:469px;top:529px;color:#fd971f;">halt</span>
<span class="t" style="left:505px;top:529px;color:#f92672;">=</span>
<span class="t" style="left:514px;top:529px;color:#f92672;">'</span>
<span class="t" style="left:523px;top:529px;color:#e6db74;">sudo shutdown <i class="h">-</i>h now</span>
<span class="t" style="left:703px;top:529px;color:#f92672;">'</span>
<span class="t" style="left:712px;top:529px;color:#465457;">$</span>
<span class="t" style="left:388px;top:547px;color:#465457;">79</span>
<span class="t B" style="left:415px;top:547px;color:#f92672;">alias</span>
<span class="t" style="left:469px;top:547px;color:#fd971f;">hibernate</span>
<span class="t" style="left:550px;top:547px;color:#f92672;">=</span>
<span class="t" style="left:559px;top:547px;color:#f92672;">'</span>
<span class="t" style="left:568px;top:547px;color:#e6db74;">sudo pm<i class="h">-</i>hibernate</span>
<span class="t" style="left:721px;top:547px;color:#f92672;">'</span>
<span class="t" style="left:730px;top:547px;color:#465457;">$</span>
<span class="t" style="left:388px;top:565px;color:#465457;">80</span>
<span class="t B" style="left:415px;top:565px;color:#f92672;">alias</span>
<span class="t" style="left:469px;top:565px;color:#fd971f;">suspend</span>
<span class="t" style="left:532px;top:565px;color:#f92672;">=</span>
<span class="t" style="left:541px;top:565px;color:#f92672;">'</span>
<span class="t" style="left:550px;top:565px;color:#e6db74;">sudo pm<i class="h">-</i>suspend</span>
<span class="t" style="left:685px;top:565px;color:#f92672;">'</span>
<span class="t" style="left:694px;top:565px;color:#465457;">$</span>
<span class="t" style="left:388px;top:583px;color:#465457;">81</span>
<span class="t" style="left:415px;top:583px;color:#465457;">$</span>
<span class="t" style="left:388px;top:601px;color:#465457;">82</span>
<span class="t" style="left:415px;top:601px;color:#7e8e91;">#other aliases</span>
<span class="t" style="left:541px;top:601px;color:#465457;">$</span>
<span class="t" style="left:388px;top:619px;color:#465457;">83</span>
<span class="t B" style="left:415px;top:619px;color:#f92672;">alias</span>
<span class="t" style="left:469px;top:619px;color:#fd971f;">rm</span>
<span class="t" style="left:487px;top:619px;color:#f92672;">=</span>
<span class="t" style="left:496px;top:619px;color:#f92672;">'</span>
<span class="t" style="left:505px;top:619px;color:#e6db74;">rm <i class="h">-</i>i</span>
<span class="t" style="left:550px;top:619px;color:#f92672;">'</span>
<span class="t" style="left:559px;top:619px;color:#465457;">$</span>
<span class="t" style="left:388px;top:637px;color:#465457;">84</span>
<span class="t" style="left:415px;top:637px;color:#465457;">$</span>
<span class="t" style="left:388px;top:655px;color:#465457;">85</span>
<span class="t B" style="left:415px;top:655px;color:#f92672;">alias</span>
<span class="t" style="left:469px;top:655px;color:#fd971f;">mounthdd</span>
<span class="t" style="left:541px;top:655px;color:#f92672;">=</span>
<span class="t" style="left:550px;top:655px;color:#f92672;">'</span>
<span class="t" style="left:559px;top:655px;color:#e6db74;">sudo /usr/local/bin/ntfs<i class="h">-</i>3g /dev/disk2s1 /Volumes/NTFS <i class="h">-</i>olocal <i class="h">-</i>oallow<i class="u">_</i>other</span>
<span class="t" style="left:1243px;top:655px;color:#f92672;">'</span>
<span class="t" style="left:1252px;top:655px;color:#465457;">$</span>
<span class="t" style="left:388px;top:673px;color:#465457;">86</span>
<span class="t B" style="left:415px;top:673px;color:#f92672;">alias</span>
<span class="t" style="left:469px;top:673px;color:#fd971f;">umounthdd</span>
<span class="t" style="left:550px;top:673px;color:#f92672;">=</span>
<span class="t" style="left:559px;top:673px;color:#f92672;">'</span>
<span class="t" style="left:568px;top:673px;color:#e6db74;">sudo umount /Volumes/NTFS</span>
<span class="t" style="left:793px;top:673px;color:#f92672;">'</span>
<span class="t" style="left:802px;top:673px;color:#465457;">$</span>
<span class="t" style="left:388px;top:691px;color:#465457;">87</span>
<span class="t" style="left:415px;top:691px;color:#465457;">$</span>
<span class="t" style="left:388px;top:709px;color:#465457;">88</span>
<span class="t" style="left:415px;top:709px;color:#7e8e91;"># Run tmux in 256 colors mode</span>
<span class="t" style="left:676px;top:709px;color:#465457;">$</span>
<span class="t" style="left:388px;top:727px;color:#465457;">89</span>
<span class="t B" style="left:415px;top:727px;color:#f92672;">alias</span>
<span class="t" style="left:469px;top:727px;color:#fd971f;">tmux</span>
<span class="t" style="left:505px;top:727px;color:#f92672;">=</span>
<span class="t" style="left:514px;top:727px;color:#f92672;">'</span>
<span class="t" style="left:523px;top:727px;color:#e6db74;">tmux <i class="h">-</i>2</span>
<span class="t" style="left:586px;top:727px;color:#f92672;">'</span>
<span class="t" style="left:595px;top:727px;color:#465457;">$</span>
<div class="b" style="left:415px;top:691px;width:9px;height:18px;background:transparent;border:1px solid #e8e8e3;box-sizing:border-box"></div>
<div class="b" style="left:361px;top:745px;width:72px;height:18px;background:#dfff00;"></div>
<span class="t B" style="left:370px;top:745px;color:#00005f;">NORMAL</span>
<div class="b" style="left:433px;top:745px;width:180px;height:18px;background:#3e3e3e;"></div>
<span class="t" style="left:442px;top:745px;color:#ffffff;">+0 ~0 <i class="h">-</i>0</span>
<svg class="b" style="left:523.6px;top:747.6px;" width="10" height="11.6" viewBox="0 0 10 11.6"><path d="M1 0.3 V11.3" stroke="#ffffff" stroke-width="1.5" fill="none"/><path d="M1 8.2 C6 7.2 8.6 4.6 8.9 0.4" stroke="#ffffff" stroke-width="1.5" fill="none"/><path d="M1 5.6 C3.6 5 5 3.2 5.2 0.4" stroke="#ffffff" stroke-width="1.5" fill="none"/></svg>
<span class="t" style="left:541px;top:745px;color:#ffffff;">master!</span>
<div class="b" style="left:613px;top:745px;width:189px;height:18px;background:#202020;"></div>
<span class="t" style="left:622px;top:745px;color:#9cffd3;">alias.bash</span>
<span class="t" style="left:739px;top:745px;color:#9cffd3;">sh</span>
<svg class="b" style="left:765.8px;top:749px;" width="11.3" height="9.4" viewBox="0 0 11.3 9.4"><rect x="0" y="0" width="11.3" height="9.4" rx="1" fill="#9cffd3"/><path d="M2.30 2.32 L4.30 4.04 L2.30 5.86" fill="none" stroke="#3f7f68" stroke-width="0.8"/><path d="M5.00 6.06 H7.40" stroke="#3f7f68" stroke-width="0.8"/></svg>
<div class="b" style="left:802px;top:745px;width:108px;height:18px;background:#3e3e3e;"></div>
<span class="t" style="left:820px;top:745px;color:#ffffff;">utf<i class="h">-</i>8</span>
<svg class="b" style="left:874px;top:747.2px;" width="10.8" height="13.0" viewBox="-0.3 0 10.8 13"><path d="M7.6 0 C7.7 1.1 7.2 2 6.6 2.6 C6 3.2 5.2 3.6 4.5 3.5 C4.4 2.5 4.9 1.6 5.5 1 C6.1 0.4 7 0 7.6 0 Z" fill="#ffffff"/><path d="M10.3 9.4 C10 10.2 9.6 10.9 9.1 11.6 C8.5 12.4 7.9 13 7.1 13 C6.3 13 6 12.5 5.1 12.5 C4.2 12.5 3.8 13 3.1 13 C2.3 13 1.7 12.3 1.1 11.5 C-0.2 9.7 -0.5 6.9 0.9 5.3 C1.6 4.5 2.6 4 3.5 4 C4.4 4 5 4.5 5.7 4.5 C6.4 4.5 7 3.9 8.1 4 C8.9 4 9.7 4.4 10.3 5.2 C8.7 6.2 8.9 8.7 10.3 9.4 Z" fill="#ffffff"/></svg>
<div class="b" style="left:910px;top:745px;width:216px;height:18px;background:#dfff00;"></div>
<span class="t" style="left:928px;top:745px;color:#00005f;">96%</span>
<svg class="b" style="left:965px;top:748.3px;" width="12" height="11" viewBox="0 0 12 11"><rect x="0" y="0" width="12" height="1.9" fill="#00005f"/><rect x="0" y="4.5" width="12" height="1.9" fill="#00005f"/><rect x="0" y="9" width="12" height="1.9" fill="#00005f"/></svg>
<span class="t B" style="left:1000px;top:745px;color:#00005f;">87/90</span>
<span class="ln" style="left:1055.3px;top:745px;color:#00005f">ln</span>
<span class="t" style="left:1081px;top:745px;color:#00005f;">:</span>
<span class="t" style="left:1108px;top:745px;color:#00005f;">1</span>
<div class="b" style="left:1126px;top:745px;width:351px;height:18px;background:#df5f00;"></div>
<svg class="b" style="left:1135.6px;top:748.3px;" width="12" height="11" viewBox="0 0 12 11"><rect x="0" y="0" width="12" height="1.9" fill="#000"/><rect x="0" y="4.5" width="5" height="1.9" fill="#000"/><rect x="7" y="4.5" width="5" height="1.9" fill="#000"/><rect x="0" y="9" width="12" height="1.9" fill="#000"/></svg>
<span class="t" style="left:1153px;top:745px;color:#000;">[76]trailing [18:54]mix<i class="h">-</i>indent<i class="h">-</i>file</span>
<span class="t" style="left:361px;top:763px;color:#f8f8f2;">if [ <i class="h">-</i>z "$SSH<i class="u">_</i>AUTH<i class="u">_</i>SOCK" <i class="h">-</i>a <i class="h">-</i>x "$SSHAGENT" ]; then</span>
<span class="t" style="left:433px;top:781px;color:#f8f8f2;">eval `$SSHAGENT $SSHAGENTARGS`</span>
<span class="t" style="left:433px;top:799px;color:#f8f8f2;">trap "kill $SSH<i class="u">_</i>AGENT<i class="u">_</i>PID" 0</span>
<span class="t" style="left:361px;top:817px;color:#f8f8f2;">fi</span>
<span class="t" style="left:361px;top:835px;color:#f8f8f2;">ssh<i class="h">-</i>add</span>
<span class="t" style="left:361px;top:871px;color:#f8f8f2;">[ <i class="h">-</i>f /usr/local/etc/profile.d/autojump.sh ] &amp;&amp; . /usr/local/etc/profile.d/autojump.sh</span>
<span class="t" style="left:361px;top:889px;color:#f8f8f2;">export PROMPT<i class="u">_</i>COMMAND="${PROMPT<i class="u">_</i>COMMAND:+$PROMPT<i class="u">_</i>COMMAND ;} history <i class="h">-</i>a"</span>
<span class="t" style="left:361px;top:907px;color:#f8f8f2;">unset PROMPT<i class="u">_</i>COMMAND</span>
<span class="t" style="left:361px;top:943px;color:#f8f8f2;"># Add RVM to PATH for scripting. Make sure this is the last PATH variable change.</span>
<span class="t" style="left:361px;top:961px;color:#f8f8f2;">export PATH="$PATH:$HOME/.rvm/bin"</span>
<span class="t" style="left:361px;top:979px;color:#f8f8f2;">export PATH="/usr/local/opt/mysql@5.5/bin:$PATH"</span>
<span class="t" style="left:361px;top:997px;color:#f8f8f2;">source &lt;(kubectl completion bash)</span>
<span class="t" style="left:361px;top:1015px;color:#f8f8f2;">source &lt;(kubectl completion bash)</span>
<div class="b" style="left:361px;top:1033px;width:27px;height:18px;background:#262626;"></div>
<svg class="b" style="left:369.5px;top:1034.7px;" width="11.124" height="13.39" viewBox="-0.3 0 10.8 13"><path d="M7.6 0 C7.7 1.1 7.2 2 6.6 2.6 C6 3.2 5.2 3.6 4.5 3.5 C4.4 2.5 4.9 1.6 5.5 1 C6.1 0.4 7 0 7.6 0 Z" fill="#ffffff"/><path d="M10.3 9.4 C10 10.2 9.6 10.9 9.1 11.6 C8.5 12.4 7.9 13 7.1 13 C6.3 13 6 12.5 5.1 12.5 C4.2 12.5 3.8 13 3.1 13 C2.3 13 1.7 12.3 1.1 11.5 C-0.2 9.7 -0.5 6.9 0.9 5.3 C1.6 4.5 2.6 4 3.5 4 C4.4 4 5 4.5 5.7 4.5 C6.4 4.5 7 3.9 8.1 4 C8.9 4 9.7 4.4 10.3 5.2 C8.7 6.2 8.9 8.7 10.3 9.4 Z" fill="#ffffff"/></svg>
<div class="b" style="left:388px;top:1033px;width:9px;height:18px;background:#0000d8;"></div>
<svg class="b" style="left:388px;top:1033px;" width="9" height="18" viewBox="0 0 9 18"><path d="M0 0 L8.1 9.0 L0 18 Z" fill="#262626"/></svg>
<div class="b" style="left:397px;top:1033px;width:99px;height:18px;background:#0000d8;"></div>
<span class="t" style="left:406px;top:1033px;color:#fbfbf8;">~/configs</span>
<div class="b" style="left:496px;top:1033px;width:9px;height:18px;background:#dcdcdc;"></div>
<svg class="b" style="left:496px;top:1033px;" width="9" height="18" viewBox="0 0 9 18"><path d="M0 0 L8.1 9.0 L0 18 Z" fill="#0000d8"/></svg>
<div class="b" style="left:505px;top:1033px;width:108px;height:18px;background:#dcdcdc;"></div>
<svg class="b" style="left:514px;top:1032px;" width="9" height="20" viewBox="0 0 9 20"><path d="M1.9 0.2 V10.4" stroke="#000" stroke-width="1.8" fill="none"/><path d="M2.1 19.4 V15.6 C2.1 11.6 5.9 12 5.9 8.4 V5.5" stroke="#000" stroke-width="1.8" fill="none"/><path d="M3.8 6.1 L5.9 3.2 L8.2 6.1 Z" fill="#000"/></svg>
<span class="t" style="left:532px;top:1033px;color:#000;">master</span>
<span class="t B" style="left:595px;top:1033px;color:#d80000;font-size:18.5px;margin-left:-1.2px;margin-top:0.5px">✗</span>
<div class="b" style="left:613px;top:1033px;width:9px;height:18px;background:#1b1d1e;"></div>
<svg class="b" style="left:613px;top:1033px;" width="9" height="18" viewBox="0 0 9 18"><path d="M0 0 L8.1 9.0 L0 18 Z" fill="#dcdcdc"/></svg>
<span class="t B" style="left:631px;top:1033px;color:#2bd92b;">$</span>
<div class="b" style="left:640px;top:1048px;width:8px;height:1.4px;background:#e8e8e3;"></div>
<div class="b" style="left:73px;top:1051px;width:234px;height:18px;background:#1c1c1c;"></div>
<span class="t" style="left:82px;top:1051px;color:#4e4e4e;">/Users/akarneyeu/configs</span>
<div class="b" style="left:307px;top:1051px;width:45px;height:18px;background:#303030;"></div>
<div class="b" style="left:352px;top:1051px;width:9px;height:18px;background:#808080;"></div>
<div class="b" style="left:361px;top:1051px;width:90px;height:18px;background:#1c1c1c;"></div>
<span class="t" style="left:370px;top:1051px;color:#4e4e4e;">TERMINAL</span>
<div class="b" style="left:451px;top:1051px;width:1026px;height:18px;background:#222222;"></div>
<span class="t" style="left:460px;top:1051px;color:#4e4e4e;">!/bin/bash [running]</span>
<div id="rim"></div>
<svg class="b" style="left:314.8px;top:81.8px" width="40" height="32" viewBox="0 0 40 32"><text x="6" y="22" font-family='"Liberation Sans","DejaVu Sans",sans-serif' font-weight="bold" font-size="19" fill="#ff0000" stroke="#ffffff" stroke-width="4.6" stroke-linejoin="round" paint-order="stroke fill" letter-spacing="1">(1)</text></svg>
<svg class="b" style="left:1438.1px;top:86.4px" width="40" height="32" viewBox="0 0 40 32"><text x="6" y="22" font-family='"Liberation Sans","DejaVu Sans",sans-serif' font-weight="bold" font-size="19" fill="#ff0000" stroke="#ffffff" stroke-width="4.6" stroke-linejoin="round" paint-order="stroke fill" letter-spacing="1">(2)</text></svg>
<svg class="b" style="left:1438.9px;top:767.4px" width="40" height="32" viewBox="0 0 40 32"><text x="6" y="22" font-family='"Liberation Sans","DejaVu Sans",sans-serif' font-weight="bold" font-size="19" fill="#ff0000" stroke="#ffffff" stroke-width="4.6" stroke-linejoin="round" paint-order="stroke fill" letter-spacing="1">(3)</text></svg>
</div>
</body></html>
